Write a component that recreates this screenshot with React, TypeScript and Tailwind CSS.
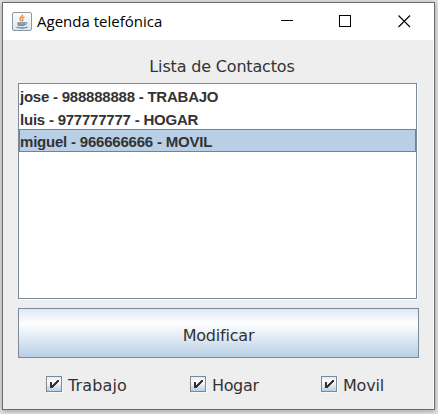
import React from "react";

const contacts = [
  { text: "jose - 988888888 - TRABAJO", selected: false, width: "tracking-[-0.230px]" },
  { text: "luis - 977777777 - HOGAR", selected: false, width: "tracking-[-0.220px]" },
  { text: "miguel - 966666666 - MOVIL", selected: true, width: "tracking-[-0.210px]" },
];

function JavaIcon() {
  return (
    <svg width="20" height="20" viewBox="0 0 20 20" fill="none">
      <defs>
        <linearGradient id="tile" x1="0" y1="0" x2="0" y2="1">
          <stop offset="0" stopColor="#ffffff" />
          <stop offset="1" stopColor="#dce4ea" />
        </linearGradient>
      </defs>
      <rect x="0.5" y="0.5" width="19" height="18" rx="1.5" fill="url(#tile)" stroke="#8c9aa5" />
      <path d="M10.500 2.500c1 2-3 2.700-2.600 4.600.2 1 1.200 1.500 1.400 2.200M12.500 5c-2.500 1-2.600 2-1.800 2.900.5.600-.1 1.200-.5 1.500" stroke="#ec9148" strokeWidth="1.500" />
      <path d="M5.500 10.300h7.500v1.900c0 1-1 1.800-2 1.800H8c-1.500 0-2.500-.8-2.500-1.800z" fill="#688ba5" />
      <path d="M13 10.700h1.700c.8 1-.6 2-2 2" stroke="#688ba5" />
      <path d="M7 11.900h5" stroke="#b9cad6" strokeWidth="0.700" />
      <path d="M4.500 15c2 1.300 9 1.300 11 0" stroke="#668aa5" strokeWidth="1.300" />
    </svg>
  );
}

function Check({ label, spacing }: { label: string; spacing: string }) {
  return (
    <label className="flex h-4 items-center">
      <span className="h-4 w-4 shrink-0 border border-[#7a8a99] bg-linear-to-b from-[#e2ebf4] via-white via-30% to-[#b8cfe5] shadow-[1px_1px_0_#f8f8f8]">
        <svg width="14" height="14" viewBox="0 0 14 14" fill="#333333" shapeRendering="crispEdges">
          <path d="M3 5h2v3h1v-1h1v-1h1v-1h1v-1h1v-1h2v2h-1v1h-1v1h-1v1h-1v1h-1v1h-1v1H3z" />
        </svg>
      </span>
      <span className={"ml-[6px] whitespace-nowrap pt-1 leading-4 " + spacing}>{label}</span>
    </label>
  );
}

export default function App() {
  return (
    <main className="h-[414px] w-[438px] overflow-hidden bg-[#e2e2e2] p-[2px] font-['DejaVu_Sans',sans-serif] text-[16px] text-[#333333]">
      <section className="flex h-[408px] w-[433px] flex-col border border-[#6d6d6d] bg-[#eeeeee] shadow-[0_1px_5px_#999999]">
        <header className="flex h-[37px] shrink-0 items-center bg-white pl-[9px] text-black">
          <JavaIcon />
          <h1 className="ml-[5px] whitespace-nowrap pb-[2px] font-['Open_Sans','Noto_Sans',sans-serif] text-[15px] leading-5">Agenda telefónica</h1>
          <svg className="ml-auto mr-[23px]" width="130" height="14" fill="none" stroke="black" shapeRendering="crispEdges">
            <path d="M0 5.500h12M58.500 0.500h11v11h-11z" />
            <path d="M117.500 0.500l11.500 11.500M129 0.500l-11.500 11.500" shapeRendering="geometricPrecision" strokeWidth="1.100" />
          </svg>
        </header>
        <div className="flex grow flex-col border-r border-[#fafafa] pl-[15px]">
          <h2 className="mt-[16px] h-[27px] w-[408px] text-center leading-[22px] tracking-[-0.170px]">Lista de Contactos</h2>
          <ul className="h-[216px] w-[399px] border border-[#7a8a99] bg-white font-['Liberation_Sans',Arial,sans-serif] text-[15px] font-bold shadow-[1px_1px_0_#ffffff]">
            {contacts.map((c) => (
              <li
                key={c.text}
                className={
                  "h-[22.500px] whitespace-nowrap border leading-[23px] " +
                  c.width +
                  (c.selected ? " border-[#6382bf] bg-[#b8cfe5]" : " border-transparent")
                }
              >
                {c.text}
              </li>
            ))}
          </ul>
          <button className="mt-[9px] h-[50px] w-[401px] border border-[#7a8a99] bg-linear-to-b from-[#dde8f3] via-white via-30% to-[#b8cfe5] pt-[5px] tracking-[-0.200px]">Modificar</button>
          <div className="mt-[18px] flex pl-[28px]">
            <div className="w-[144px]"><Check label="Trabajo" spacing="tracking-[0.150px]" /></div>
            <div className="w-[131px]"><Check label="Hogar" spacing="tracking-[-0.350px]" /></div>
            <Check label="Movil" spacing="tracking-[-0.200px]" />
          </div>
        </div>
      </section>
    </main>
  );
}
